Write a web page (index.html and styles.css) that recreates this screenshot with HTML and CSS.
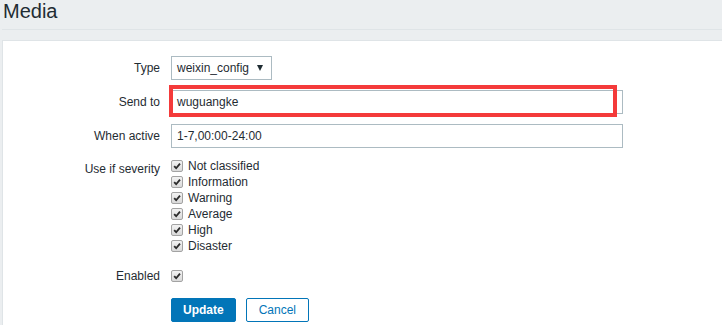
FILE: index.html
```html
<html>

<head>
  <meta charset="utf8">
  <title>Media</title>
  <link rel="stylesheet" href="styles.css">
</head>

<body>
  <section class="page">
    <div class="header">
      <h1>Media</h1>
    </div>
    <section class="panel">
      <div class="form">
        <div class="row">
          <label class="label">Type</label>
          <div class="control">
            <div class="select">
              <span class="select-text">weixin_config</span>
              <span class="arrow"></span>
            </div>
          </div>
        </div>
        <div class="row">
          <label class="label">Send to</label>
          <div class="control mark-wrap">
            <div class="input">wuguangke</div>
            <div class="mark"></div>
          </div>
        </div>
        <div class="row">
          <label class="label">When active</label>
          <div class="control">
            <div class="input">1-7,00:00-24:00</div>
          </div>
        </div>
        <div class="row row-top">
          <label class="label label-list">Use if severity</label>
          <ul class="checks">
            <li><span class="box"><svg viewBox="0 0 12 12"><path d="M2.6 6.2 L5 8.7 L9.6 3.2"/></svg></span>Not classified</li>
            <li><span class="box"><svg viewBox="0 0 12 12"><path d="M2.6 6.2 L5 8.7 L9.6 3.2"/></svg></span>Information</li>
            <li><span class="box"><svg viewBox="0 0 12 12"><path d="M2.6 6.2 L5 8.7 L9.6 3.2"/></svg></span>Warning</li>
            <li><span class="box"><svg viewBox="0 0 12 12"><path d="M2.6 6.2 L5 8.7 L9.6 3.2"/></svg></span>Average</li>
            <li><span class="box"><svg viewBox="0 0 12 12"><path d="M2.6 6.2 L5 8.7 L9.6 3.2"/></svg></span>High</li>
            <li><span class="box"><svg viewBox="0 0 12 12"><path d="M2.6 6.2 L5 8.7 L9.6 3.2"/></svg></span>Disaster</li>
          </ul>
        </div>
        <div class="row">
          <label class="label">Enabled</label>
          <div class="control">
            <span class="box"><svg viewBox="0 0 12 12"><path d="M2.6 6.2 L5 8.7 L9.6 3.2"/></svg></span>
          </div>
        </div>
        <div class="row">
          <span class="label"></span>
          <div class="control buttons">
            <button class="btn btn-main">Update</button>
            <button class="btn btn-alt">Cancel</button>
          </div>
        </div>
      </div>
    </section>
  </section>
</body>

</html>
```

FILE: styles.css
```css
* {
  margin: 0;
  padding: 0;
  box-sizing: border-box;
}

body {
  font-family: "Liberation Sans", Arial, sans-serif;
  font-size: 12px;
  color: #1f2c33;
  background-color: #ebeef0;
  overflow: hidden;
}

.page {
  padding-left: 2px;
}

.header {
  height: 30px;
  border-bottom: 1px solid #dfe4e7;
  margin-bottom: 10px;
}

.header h1 {
  font-size: 20px;
  font-weight: normal;
  line-height: 22px;
  padding-left: 1px;
}

.panel {
  background-color: #fff;
  border-top: 1px solid #dfe4e7;
  border-left: 1px solid #dfe4e7;
  padding: 15px 0 20px 0;
  height: 300px;
}

.form {
  display: flex;
  flex-direction: column;
  gap: 10px;
}

.row {
  display: flex;
  align-items: center;
  gap: 11px;
}

.row-top {
  align-items: flex-start;
}

.label {
  width: 157px;
  text-align: right;
  line-height: 16px;
}

.label-list {
  padding-top: 3px;
}

.control {
  display: flex;
  align-items: center;
  min-height: 24px;
}

.select {
  width: 101px;
  height: 24px;
  border: 1px solid #acbbc2;
  display: flex;
  align-items: center;
  justify-content: space-between;
  padding: 0 8px 0 5px;
}

.arrow {
  width: 0;
  height: 0;
  border-left: 3.5px solid transparent;
  border-right: 3.5px solid transparent;
  border-top: 6px solid #1f2c33;
}

.input {
  width: 452px;
  height: 24px;
  line-height: 22px;
  border: 1px solid #acbbc2;
  padding: 0 5px;
  background-color: #fff;
}

.mark-wrap {
  position: relative;
}

.mark {
  position: absolute;
  left: -2px;
  top: -5px;
  width: 448px;
  height: 32px;
  border: 4px solid #f43a3a;
}

.checks {
  list-style: none;
}

.checks li {
  display: flex;
  align-items: center;
  height: 16px;
  line-height: 16px;
}

.box {
  display: inline-block;
  width: 12px;
  height: 12px;
  border: 1px solid #a3a3a3;
  border-radius: 2px;
  background: linear-gradient(#f2f2f2, #d9d9d9);
  margin-right: 5px;
}

.box svg {
  display: block;
  width: 10px;
  height: 10px;
}

.box path {
  fill: none;
  stroke: #2b2b2b;
  stroke-width: 2.2;
}

.buttons {
  gap: 10px;
}

.btn {
  height: 24px;
  padding: 0 11px;
  font-family: "Liberation Sans", Arial, sans-serif;
  font-size: 12px;
  border: 1px solid #0275b8;
  border-radius: 2px;
}

.btn-main {
  background-color: #0275b8;
  color: #fff;
  font-weight: bold;
}

.btn-alt {
  background-color: #fff;
  color: #0275b8;
  padding: 0 12px;
}
```
